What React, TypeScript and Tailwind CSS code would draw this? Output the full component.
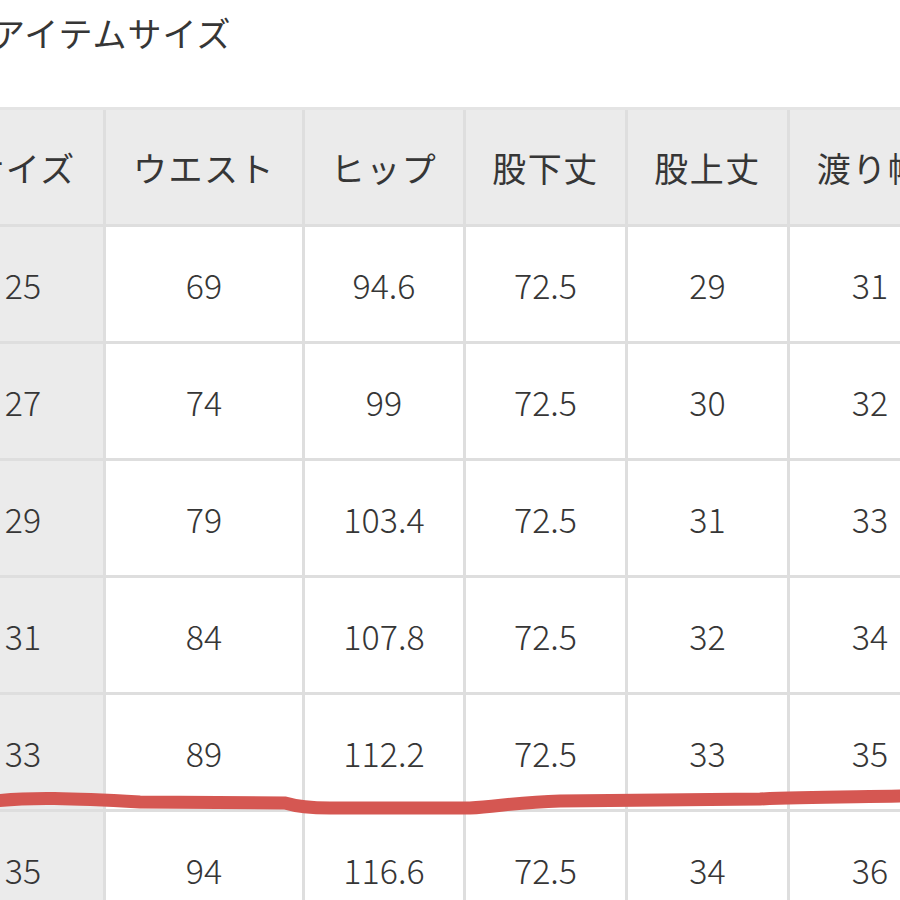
const headers = ["サイズ", "ウエスト", "ヒップ", "股下丈", "股上丈", "渡り幅"];

const rows = [
  ["25", "69", "94.6", "72.5", "29", "31"],
  ["27", "74", "99", "72.5", "30", "32"],
  ["29", "79", "103.4", "72.5", "31", "33"],
  ["31", "84", "107.8", "72.5", "32", "34"],
  ["33", "89", "112.2", "72.5", "33", "35"],
  ["35", "94", "116.6", "72.5", "34", "36"],
];

export default function App() {
  return (
    <div
      className="relative w-[900px] h-[900px] overflow-hidden bg-white text-[#363636]"
      style={{ fontFamily: '"Noto Sans CJK JP", "Noto Sans", sans-serif' }}
    >
      <h2 className="ml-[-9px] pt-[14px] h-[107px] text-[34px] leading-[38px] font-normal tracking-[1px]">
        アイテムサイズ
      </h2>
      <div className="ml-[-57px] w-[1010px] grid grid-cols-[160px_196px_158px_159px_159px_160px] gap-[3px] bg-[#dedede] border-t-[3px] border-[#e4e4e4]">
        {headers.map((h) => (
          <div
            key={h}
            className="h-[114px] bg-[#ebebeb] flex items-center justify-center text-[34px] tracking-[1.5px]"
          >
            {h}
          </div>
        ))}
        {rows.map((r, i) =>
          r.map((v, j) => (
            <div
              key={i + "-" + j}
              className={
                "h-[114px] flex items-center justify-center text-[34px] font-light " +
                (j == 0 ? "bg-[#ebebeb]" : "bg-white")
              }
            >
              {v}
            </div>
          ))
        )}
      </div>
      <svg
        className="absolute left-0 top-0 pointer-events-none"
        width="900"
        height="900"
        viewBox="0 0 900 900"
      >
        <path
          d="M -5 801 C 30 797, 70 798, 140 802 L 285 803 C 295 806, 310 808, 330 808 L 470 808 C 500 806, 520 802, 560 801 L 760 799 C 800 797, 850 797, 905 796"
          fill="none"
          stroke="#d55752"
          strokeWidth="13"
          strokeLinecap="round"
        />
      </svg>
    </div>
  );
}
